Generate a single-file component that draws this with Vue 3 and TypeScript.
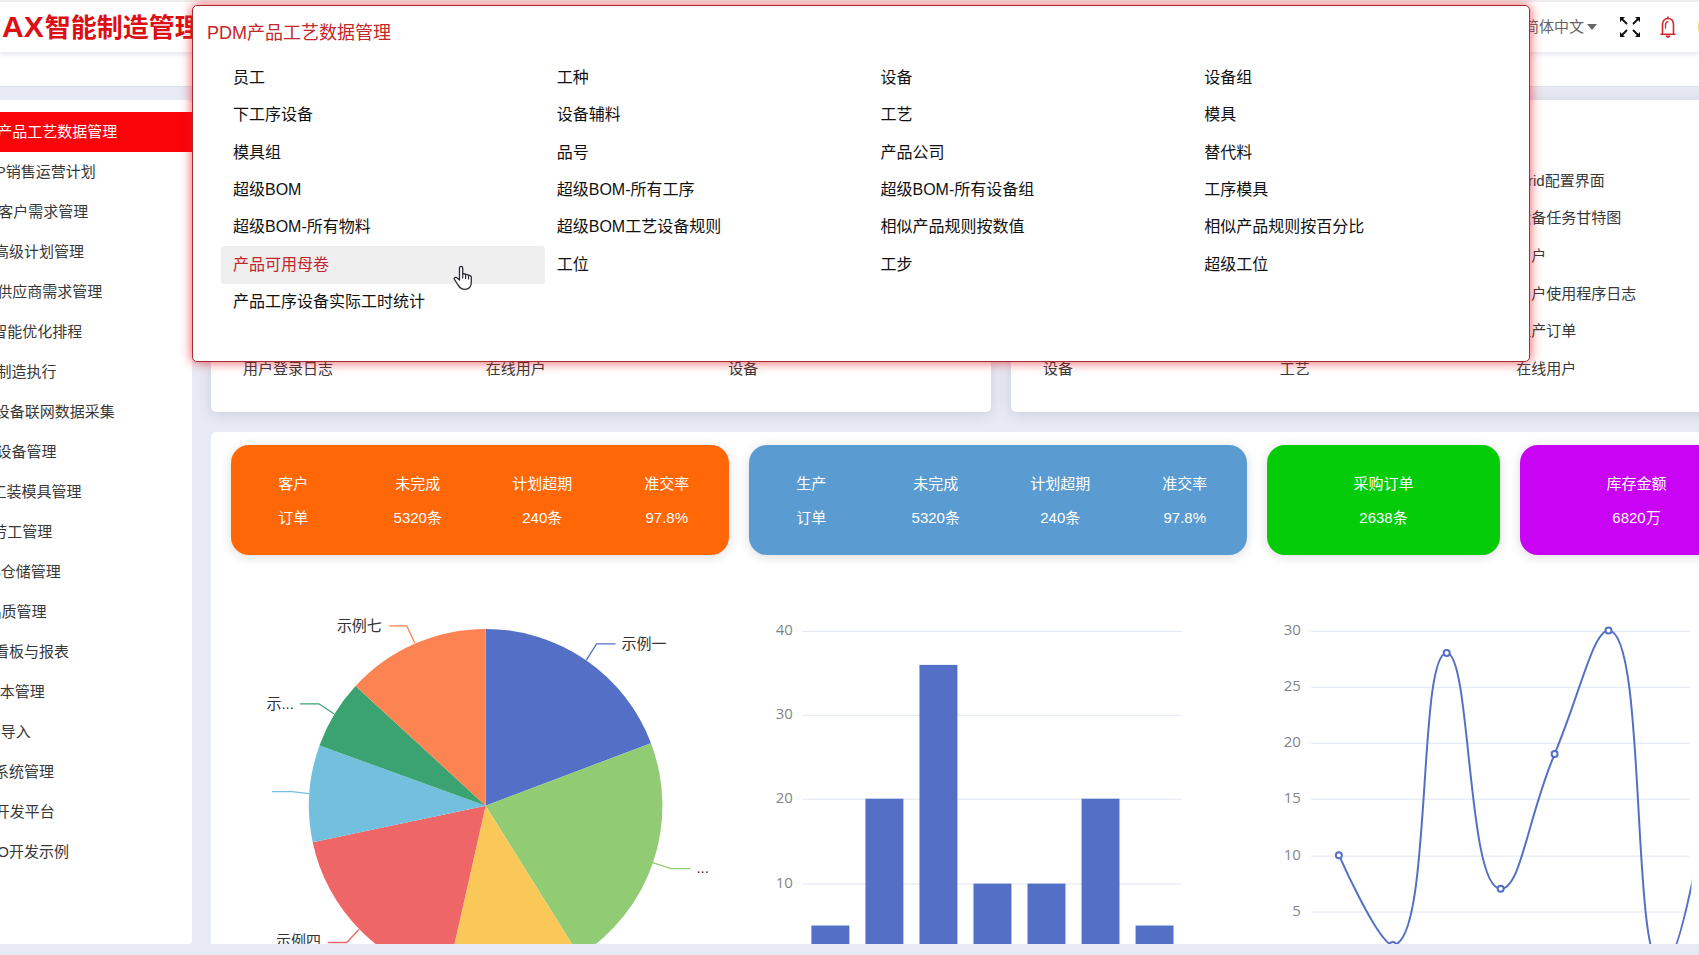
<script setup lang="ts">
import { ref } from 'vue'

interface Point { x: number; y: number }
interface Shortcut { text: string; col: number; row: number }
interface Stat { head: string; value: string }
interface StatCard { tone: string; stats: Stat[] }

const language = ref('zh')
const activeModule = ref(0)
const hoveredEntry = ref('产品可用母卷')

const modules: string[] = [
  'PDM产品工艺数据管理', 'S&OP销售运营计划', 'CRM客户需求管理', 'APS高级计划管理',
  'SRM供应商需求管理', 'FAS智能优化排程', 'MES制造执行', 'DAS设备联网数据采集',
  'EAM设备管理', 'TPL工装模具管理', 'LES劳工管理', 'WMS仓储管理', 'QC品质管理',
  'RPT看板与报表', 'CA成本管理', 'Excel导入', 'SYS系统管理', 'DEV开发平台', 'DEMO开发示例'
]

const entries: string[] = [
  '员工', '工种', '设备', '设备组',
  '下工序设备', '设备辅料', '工艺', '模具',
  '模具组', '品号', '产品公司', '替代料',
  '超级BOM', '超级BOM-所有工序', '超级BOM-所有设备组', '工序模具',
  '超级BOM-所有物料', '超级BOM工艺设备规则', '相似产品规则按数值', '相似产品规则按百分比',
  '产品可用母卷', '工位', '工步', '超级工位',
  '产品工序设备实际工时统计'
]

const recent: Shortcut[] = [
  { text: '用户登录日志', col: 1, row: 6 },
  { text: '在线用户', col: 2, row: 6 },
  { text: '设备', col: 3, row: 6 }
]

const favourites: Shortcut[] = [
  { text: 'Grid配置界面', col: 3, row: 1 },
  { text: '设备任务甘特图', col: 3, row: 2 },
  { text: '用户', col: 3, row: 3 },
  { text: '用户使用程序日志', col: 3, row: 4 },
  { text: '生产订单', col: 3, row: 5 },
  { text: '设备', col: 1, row: 6 },
  { text: '工艺', col: 2, row: 6 },
  { text: '在线用户', col: 3, row: 6 }
]

const orderStats = (name: string): Stat[] => [
  { head: name, value: '订单' },
  { head: '未完成', value: '5320条' },
  { head: '计划超期', value: '240条' },
  { head: '准交率', value: '97.8%' }
]

const cards: StatCard[] = [
  { tone: 'orange', stats: orderStats('客户') },
  { tone: 'blue', stats: orderStats('生产') },
  { tone: 'green', stats: [{ head: '采购订单', value: '2638条' }] },
  { tone: 'purple', stats: [{ head: '库存金额', value: '6820万' }] }
]

// Pie chart
const centre: Point = { x: 255, y: 231 }
const radius = 177
const palette = ['#5470c6', '#91cc75', '#fac858', '#ee6666', '#73c0de', '#3ba272', '#fc8452']
const stops = [0, 69.3, 148, 192.7, 258.1, 289.9, 312.6, 360]

function onCircle(deg: number): string {
  const a = (deg * Math.PI) / 180
  return `${(centre.x + radius * Math.sin(a)).toFixed(2)} ${(centre.y - radius * Math.cos(a)).toFixed(2)}`
}

const slices = palette.map((fill, i) => ({
  fill,
  d: `M${centre.x} ${centre.y}L${onCircle(stops[i])}A${radius} ${radius} 0 0 1 ${onCircle(stops[i + 1])}Z`
}))

const leaders = [
  { color: palette[0], points: '356,85 366,69 385,69' },
  { color: palette[1], points: '422,288 441,294 460,294' },
  { color: palette[3], points: '128,355 116,368 97,368' },
  { color: palette[4], points: '78,219 61,217 41,217' },
  { color: palette[5], points: '103,139 88,129 69,129' },
  { color: palette[6], points: '184,68 176,51 158,51' }
]

const pieLabels = [
  { text: '示例一', x: 391, y: 74, anchor: 'start' },
  { text: '...', x: 466, y: 298, anchor: 'start' },
  { text: '示例四', x: 90, y: 371, anchor: 'end' },
  { text: '示...', x: 63, y: 134, anchor: 'end' },
  { text: '示例七', x: 151, y: 56, anchor: 'end' }
]

// Bar chart
const axisLeft = 65
const axisRight = 444
const baseY = 393
const step = 54
const barValues = [5, 20, 36, 10, 10, 20, 5]
const barY = (v: number): number => Math.round(baseY - v * 8.43)
const bars = barValues.map((v, i) => ({ x: 73.5 + i * 54.1, y: barY(v), h: baseY - barY(v) }))
const barTicks = [40, 30, 20, 10, 0]

// Line chart
const lineY = (v: number): number => baseY - v * 11.25
const lineTicks = [30, 25, 20, 15, 10, 5, 0]
const linePoints: Point[] = [10, 2, 28, 7, 19, 30, 0, 20].map((v, i) => ({ x: 93 + i * step, y: lineY(v) }))

function clamp(v: number, a: number, b: number): number {
  return Math.min(Math.max(v, Math.min(a, b)), Math.max(a, b))
}

function smoothPath(pts: Point[]): string {
  let d = `M${pts[0].x} ${pts[0].y}`
  let out: Point = pts[0]
  for (let i = 1; i < pts.length; i++) {
    const prev = pts[i - 1]
    const p = pts[i]
    const next = pts[i + 1]
    let cin: Point = p
    let cout: Point = p
    if (next) {
      const before = Math.hypot(p.x - prev.x, p.y - prev.y)
      const after = Math.hypot(next.x - p.x, next.y - p.y)
      const share = (0.5 * after) / (before + after)
      cout = {
        x: clamp(p.x + (next.x - prev.x) * share, p.x, next.x),
        y: clamp(p.y + (next.y - prev.y) * share, p.y, next.y)
      }
      cin = {
        x: clamp(p.x - ((cout.x - p.x) * before) / after, prev.x, p.x),
        y: clamp(p.y - ((cout.y - p.y) * before) / after, prev.y, p.y)
      }
      cout = {
        x: p.x + ((p.x - cin.x) * after) / before,
        y: p.y + ((p.y - cin.y) * after) / before
      }
    }
    d += `C${out.x} ${out.y} ${cin.x} ${cin.y} ${p.x} ${p.y}`
    out = cout
  }
  return d
}

const linePath = smoothPath(linePoints)
</script>

<template>
  <div class="shell">
    <header class="topbar">
      <h1 class="brand"><span class="brand-latin">AX</span>智能制造管理</h1>
      <div class="tools">
        <label class="lang">
          <select v-model="language" aria-label="语言">
            <option value="zh">简体中文</option>
          </select>
          <svg width="10" height="6" viewBox="0 0 10 6" aria-hidden="true"><path d="M0 0H10L5 6Z" fill="#666" /></svg>
        </label>
        <button class="tool" type="button" aria-label="全屏">
          <svg width="20" height="20" viewBox="0 0 20 20" aria-hidden="true">
            <path
              d="M1.500 1.500L7 7M18.500 1.500L13 7M1.500 18.500L7 13M18.500 18.500L13 13"
              fill="none" stroke="#111" stroke-width="1.800"
            />
            <path d="M0 0H5L0 5ZM20 0V5L15 0ZM0 20V15L5 20ZM20 20H15L20 15Z" fill="#111" />
          </svg>
        </button>
        <button class="tool" type="button" aria-label="通知">
          <svg width="16" height="22" viewBox="0 0 16 22" aria-hidden="true">
            <g fill="none" stroke="#cf2a2f" stroke-width="1.6" stroke-linecap="round" stroke-linejoin="round">
              <path d="M2.500 17.500V9C2.500 5 4.500 2.500 8 2.500S13.500 5 13.500 9V17.500M1 18.200H15M8 1V2.500" />
              <path d="M5.500 12V9C5.500 7.200 6.200 6 7.800 5.600" stroke-width="1.300" />
            </g>
            <path d="M5.500 19.500H10.500C10.200 21 9.300 21.800 8 21.800S5.800 21 5.500 19.500Z" fill="#cf2a2f" />
          </svg>
        </button>
        <span class="avatar"></span>
      </div>
    </header>
    <div class="tabbar"></div>

    <div class="body">
      <nav class="sidebar" aria-label="模块">
        <a
          v-for="(name, i) in modules"
          :key="name"
          href="#"
          class="module"
          :class="{ active: i === activeModule }"
          @click.prevent="activeModule = i"
        ><span class="module-name">{{ name }}</span></a>
      </nav>

      <main class="main">
        <div class="panels">
          <section class="panel">
            <a v-for="s in recent" :key="s.text" href="#" :class="['shortcut', `c${s.col}`, `r${s.row}`]">{{ s.text }}</a>
          </section>
          <section class="panel">
            <a v-for="s in favourites" :key="s.text" href="#" :class="['shortcut', `c${s.col}`, `r${s.row}`]">{{ s.text }}</a>
          </section>
        </div>

        <section class="board">
          <div class="cards">
            <div v-for="card in cards" :key="card.tone" :class="['card', card.tone]">
              <div v-for="stat in card.stats" :key="stat.head" class="stat">
                <span>{{ stat.head }}</span>
                <span>{{ stat.value }}</span>
              </div>
            </div>
          </div>

          <div class="charts">
            <svg class="chart" viewBox="0 0 508 420" role="img" aria-label="饼图">
              <path v-for="s in slices" :key="s.fill" :d="s.d" :fill="s.fill" />
              <polyline v-for="l in leaders" :key="l.color" :points="l.points" :stroke="l.color" class="leader" />
              <text v-for="t in pieLabels" :key="t.text" :x="t.x" :y="t.y" :text-anchor="t.anchor" class="pie-label">{{ t.text }}</text>
            </svg>

            <svg class="chart" viewBox="0 0 508 420" role="img" aria-label="柱状图">
              <g v-for="t in barTicks" :key="t">
                <line :x1="axisLeft" :x2="axisRight" :y1="barY(t) + 0.5" :y2="barY(t) + 0.5" class="grid-line" />
                <text x="55" :y="barY(t) + 4" class="tick">{{ t }}</text>
              </g>
              <rect v-for="b in bars" :key="b.x" :x="b.x" :y="b.y" width="38" :height="b.h" fill="#5470c6" />
            </svg>

            <svg class="chart" viewBox="0 0 508 420" role="img" aria-label="折线图">
              <defs>
                <clipPath id="plot"><rect x="62" y="50" width="384" height="370" /></clipPath>
              </defs>
              <g v-for="t in lineTicks" :key="t">
                <line :x1="axisLeft" :x2="axisRight" :y1="Math.round(lineY(t)) + 0.5" :y2="Math.round(lineY(t)) + 0.5" class="grid-line" />
                <text x="55" :y="Math.round(lineY(t)) + 4" class="tick">{{ t }}</text>
              </g>
              <g clip-path="url(#plot)">
                <path :d="linePath" class="curve" />
                <circle v-for="p in linePoints" :key="p.x" :cx="p.x" :cy="p.y" r="3" class="dot" />
              </g>
            </svg>
          </div>
        </section>
      </main>
    </div>

    <div class="flyout">
      <h2 class="flyout-title">PDM产品工艺数据管理</h2>
      <div class="entries">
        <a
          v-for="e in entries"
          :key="e"
          href="#"
          class="entry"
          :class="{ hovered: e === hoveredEntry }"
          @mouseenter="hoveredEntry = e"
        >{{ e }}</a>
      </div>
    </div>

    <svg class="cursor" width="20" height="26" viewBox="0 0 20 26" aria-hidden="true">
      <path
        d="M6.500 15V3C6.500 0.700 9.700 0.700 9.700 3V9.500C9.900 8.300 12.500 8.500 12.600 10C13 9 15.300 9.300 15.500 10.800C16.200 9.900 18.300 10.500 18.300 12.300V17C18.300 21.500 16 24.300 11.800 24.300C8.300 24.300 6.800 22.800 5.300 20.300L1.500 14.500C0.600 12.800 2.800 11.700 4.200 13Z"
        fill="#fff" stroke="#2b2b35" stroke-width="1.300" stroke-linejoin="round"
      />
      <path d="M9.700 9.500V13M12.600 10V13.500M15.500 10.800V14" fill="none" stroke="#2b2b35" stroke-width="1.200" stroke-linecap="round" />
    </svg>
  </div>
</template>

<style>
body {
  margin: 0;
  overflow: hidden;
}
</style>

<style scoped>
.shell {
  position: relative;
  display: flex;
  flex-direction: column;
  height: 100vh;
  overflow: hidden;
  background: #e7eaf4;
  color: #383838;
  font-family: "Liberation Sans", "Noto Sans CJK SC", sans-serif;
  font-size: 15px;
  line-height: 20px;
}

a {
  color: inherit;
  text-decoration: none;
}

.topbar {
  position: relative;
  z-index: 1;
  display: flex;
  flex: none;
  align-items: center;
  justify-content: space-between;
  box-sizing: border-box;
  height: 52px;
  border-top: 2px solid #efefef;
  background: #fff;
  box-shadow: 0 1px 6px rgba(80, 90, 160, 0.22);
}

.brand {
  margin: 0;
  padding-left: 2px;
  color: #dc1014;
  font-size: 26px;
  font-weight: 700;
  line-height: 40px;
  white-space: nowrap;
}

.brand-latin {
  margin-right: 1px;
  font-size: 30px;
}

.tools {
  display: flex;
  align-items: center;
  gap: 20px;
  margin-right: -31px;
}

.lang {
  display: flex;
  align-items: center;
  gap: 2px;
  margin-right: 3px;
  color: #666;
}

.lang select {
  appearance: none;
  margin: 0;
  padding: 0;
  border: 0;
  background: none;
  color: inherit;
  font: inherit;
}

.tool {
  display: flex;
  padding: 0;
  border: 0;
  background: none;
  cursor: pointer;
}

.avatar {
  width: 32px;
  height: 32px;
  margin-left: 2px;
  border-radius: 16px;
  background: #f7d774;
}

.tabbar {
  flex: none;
  box-sizing: border-box;
  height: 35px;
  border-bottom: 1px solid #dde0e8;
  background: #fff;
}

.body {
  display: flex;
  flex: 1;
  gap: 19px;
  min-height: 0;
  padding: 13px 0 11px;
}

.sidebar {
  flex: none;
  box-sizing: border-box;
  width: 192px;
  padding-top: 12px;
  overflow: hidden;
  border-radius: 0 4px 4px 0;
  background: #fff;
}

.module {
  display: flex;
  align-items: center;
  height: 40px;
  white-space: nowrap;
}

.module-name {
  margin-left: -36px;
}

.module.active {
  background: #fa0309;
  color: #fff;
}

.main {
  display: flex;
  flex: 1;
  flex-direction: column;
  gap: 20px;
  min-width: 0;
  margin-right: -74px;
}

.panels {
  display: grid;
  flex: none;
  grid-template-columns: 780fr 762fr;
  gap: 20px;
}

.panel {
  display: grid;
  grid-template-rows: repeat(6, 1fr);
  grid-template-columns: repeat(3, 1fr);
  align-items: center;
  box-sizing: border-box;
  height: 312px;
  padding: 62px 20px 24px 32px;
  border-radius: 5px;
  background: #fff;
  box-shadow: 0 2px 14px rgba(60, 70, 100, 0.16);
}

.c1 { grid-column: 1; }
.c2 { grid-column: 2; }
.c3 { grid-column: 3; }
.r1 { grid-row: 1; }
.r2 { grid-row: 2; }
.r3 { grid-row: 3; }
.r4 { grid-row: 4; }
.r5 { grid-row: 5; }
.r6 { grid-row: 6; }

.board {
  flex: 1;
  min-height: 0;
  padding: 13px 20px 0;
  overflow: hidden;
  border-radius: 5px 5px 0 0;
  background: #fff;
}

.cards {
  display: grid;
  grid-template-columns: 498fr 498fr 233fr 233fr;
  gap: 20px;
}

.card {
  display: flex;
  align-items: center;
  box-sizing: border-box;
  height: 110px;
  padding-top: 2px;
  border-radius: 18px;
  box-shadow: 0 2px 12px rgba(0, 0, 0, 0.14);
  color: #fff;
}

.stat {
  display: flex;
  flex: 1;
  flex-direction: column;
  gap: 14px;
  text-align: center;
}

.orange { background: #ff6707; }
.blue { background: #5a9bd1; }
.green { background: #04cc08; }
.purple { background: #c903f3; }

.charts {
  display: grid;
  grid-template-columns: repeat(3, 1fr);
  margin-top: 20px;
}

.chart {
  display: block;
  width: 100%;
}

.leader {
  fill: none;
  stroke-width: 1.3;
}

.pie-label {
  fill: #333;
  font-size: 15px;
}

.tick {
  fill: #83858c;
  font-family: "Open Sans", sans-serif;
  font-size: 15px;
  text-anchor: end;
}

.grid-line {
  stroke: #e0e6f1;
}

.curve {
  fill: none;
  stroke: #5470c6;
  stroke-width: 2;
}

.dot {
  fill: #fff;
  stroke: #5470c6;
  stroke-width: 2;
}

.flyout {
  position: absolute;
  z-index: 2;
  top: 5px;
  right: 169px;
  left: 192px;
  box-sizing: border-box;
  padding: 15px 13px 40px 28px;
  border: 1px solid #a62c30;
  border-radius: 5px;
  background: #fff;
  box-shadow: 0 0 12px rgba(235, 20, 30, 0.75);
}

.flyout-title {
  margin: 0 0 14px -14px;
  color: #c4262b;
  font-size: 18px;
  font-weight: 400;
  line-height: 24px;
}

.entries {
  display: grid;
  grid-template-rows: repeat(7, 1fr);
  grid-template-columns: repeat(4, 1fr);
  height: 262px;
}

.entry {
  display: flex;
  align-items: center;
  padding-left: 12px;
  border-radius: 3px;
  color: #111;
  font-size: 16px;
}

.entry.hovered {
  background: #efefef;
  color: #c4262b;
}

.cursor {
  position: absolute;
  z-index: 3;
  top: 265px;
  left: 453px;
}
</style>
